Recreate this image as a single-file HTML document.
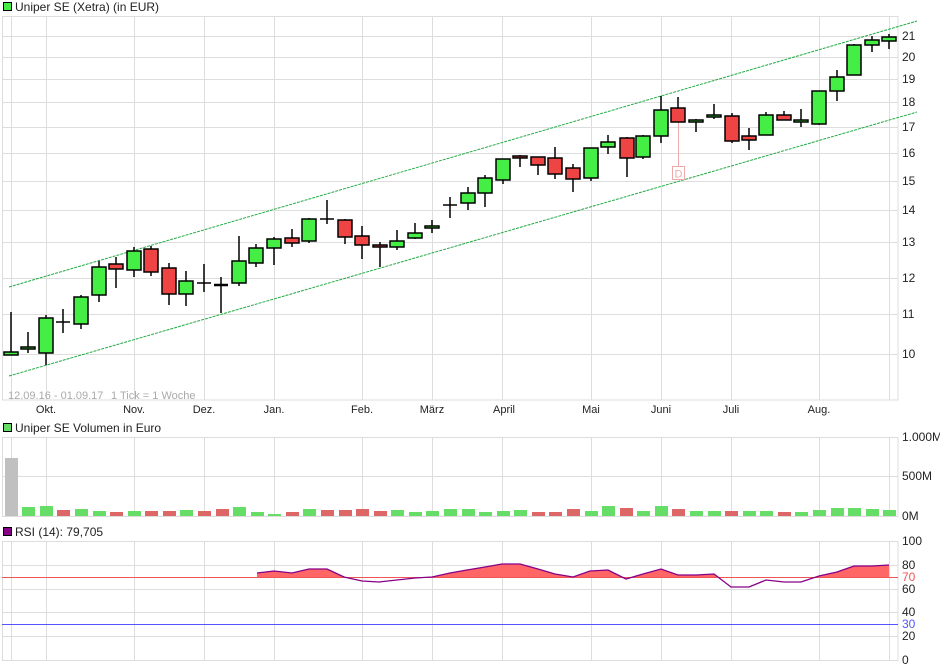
<!DOCTYPE html>
<html><head><meta charset="utf-8"><style>
html,body{margin:0;padding:0;background:#fff;}
svg{display:block;font-family:"Liberation Sans",Arial,sans-serif;}
</style></head><body>
<svg width="940" height="670" viewBox="0 0 940 670" xmlns="http://www.w3.org/2000/svg">
<rect width="940" height="670" fill="#fff"/>
<rect x="3.5" y="2.5" width="8" height="8" fill="#44ee44" stroke="#000" stroke-width="1"/>
<text x="15" y="11" font-size="12" fill="#222">Uniper SE (Xetra) (in EUR)</text>
<rect x="3.5" y="423.5" width="8" height="8" fill="#66dd66" stroke="#000" stroke-width="1"/>
<text x="15" y="432" font-size="12" fill="#222">Uniper SE Volumen in Euro</text>
<rect x="3.5" y="527.5" width="8" height="8" fill="#880088" stroke="#000" stroke-width="1"/>
<text x="15" y="536" font-size="12" fill="#222">RSI (14): 79,705</text>

<g stroke="#dddddd" stroke-width="1" fill="none">
<rect x="2.5" y="16.5" width="895.5" height="383.5"/>
<path d="M2 36.5H898M2 57.5H898M2 79.5H898M2 102.5H898M2 127.5H898M2 153.5H898M2 181.5H898M2 210.5H898M2 242.5H898M2 278.5H898M2 314.5H898M2 354.5H898"/>
<path d="M11.5 16V400M46.5 16V400M134.5 16V400M204.5 16V400M274.5 16V400M362.5 16V400M432.5 16V400M502.5 16V400M591.5 16V400M661.5 16V400M731.5 16V400M819.5 16V400M889.5 16V400"/>
<rect x="2.5" y="437.5" width="895.5" height="79"/>
<path d="M2 476.5H898"/>
<path d="M11.5 437V516M46.5 437V516M134.5 437V516M204.5 437V516M274.5 437V516M362.5 437V516M432.5 437V516M502.5 437V516M591.5 437V516M661.5 437V516M731.5 437V516M819.5 437V516M889.5 437V516"/>
<rect x="2.5" y="541.5" width="895.5" height="119"/>
<path d="M2 565.5H898M2 589.5H898M2 612.5H898M2 636.5H898"/>
<path d="M11.5 541V660M46.5 541V660M134.5 541V660M204.5 541V660M274.5 541V660M362.5 541V660M432.5 541V660M502.5 541V660M591.5 541V660M661.5 541V660M731.5 541V660M819.5 541V660M889.5 541V660"/>
</g>

<g font-size="12" fill="#222">
<text x="902" y="40">21</text><text x="902" y="61">20</text><text x="902" y="83">19</text><text x="902" y="106">18</text><text x="902" y="131">17</text><text x="902" y="157">16</text><text x="902" y="185">15</text><text x="902" y="214">14</text><text x="902" y="246">13</text><text x="902" y="282">12</text><text x="902" y="318">11</text><text x="902" y="358">10</text>
<text x="902" y="441">1.000M</text><text x="902" y="480">500M</text><text x="902" y="520">0M</text>
<text x="902" y="545">100</text><text x="902" y="569">80</text><text x="902" y="581" fill="#ee5555">70</text><text x="902" y="593">60</text><text x="902" y="616">40</text><text x="902" y="628" fill="#5555ff">30</text><text x="902" y="640">20</text><text x="902" y="664">0</text>
</g>
<g font-size="11" fill="#222" text-anchor="middle">
<text x="46" y="413">Okt.</text><text x="134" y="413">Nov.</text><text x="204" y="413">Dez.</text><text x="274" y="413">Jan.</text><text x="362" y="413">Feb.</text><text x="432" y="413">März</text><text x="504" y="413">April</text><text x="591" y="413">Mai</text><text x="661" y="413">Juni</text><text x="731" y="413">Juli</text><text x="819" y="413">Aug.</text>
</g>
<text x="8" y="399" font-size="11" fill="#aaaaaa">12.09.16 - 01.09.17</text>
<text x="111" y="399" font-size="11" fill="#aaaaaa">1 Tick = 1 Woche</text>

<path d="M9 287L917 21M9 376L917 112" stroke="#22aa44" stroke-width="1" stroke-dasharray="3,1" fill="none"/>

<path d="M678.5 122V168" stroke="#eeaaaa" stroke-width="1"/>
<rect x="672.5" y="166.5" width="12" height="13" fill="#fff" stroke="#eeaaaa"/>
<text x="678.5" y="177.5" font-size="11" fill="#eeaaaa" text-anchor="middle">D</text>

<g stroke="#000" stroke-width="1.5">
<line x1="11" y1="312" x2="11" y2="355"/><rect x="4" y="352" width="14" height="3" fill="#44ee44"/>
<line x1="28" y1="332" x2="28" y2="353"/><rect x="21" y="347" width="14" height="2" fill="#44ee44"/>
<line x1="46" y1="315" x2="46" y2="365"/><rect x="39" y="318" width="14" height="35" fill="#44ee44"/>
<line x1="63" y1="309" x2="63" y2="333"/><line x1="56" y1="322" x2="70" y2="322"/>
<line x1="81" y1="295" x2="81" y2="329"/><rect x="74" y="297" width="14" height="27" fill="#44ee44"/>
<line x1="99" y1="261" x2="99" y2="302"/><rect x="92" y="267" width="14" height="28" fill="#44ee44"/>
<line x1="116" y1="257" x2="116" y2="288"/><rect x="109" y="264" width="14" height="5" fill="#ee4444"/>
<line x1="134" y1="247" x2="134" y2="277"/><rect x="127" y="251" width="14" height="19" fill="#44ee44"/>
<line x1="151" y1="246" x2="151" y2="276"/><rect x="144" y="249" width="14" height="23" fill="#ee4444"/>
<line x1="169" y1="263" x2="169" y2="305"/><rect x="162" y="268" width="14" height="26" fill="#ee4444"/>
<line x1="186" y1="271" x2="186" y2="306"/><rect x="179" y="281" width="14" height="13" fill="#44ee44"/>
<line x1="204" y1="264" x2="204" y2="292"/><line x1="197" y1="283" x2="211" y2="283"/>
<line x1="221" y1="277" x2="221" y2="313"/><line x1="214" y1="285" x2="228" y2="285" stroke-width="2.5"/>
<line x1="239" y1="236" x2="239" y2="286"/><rect x="232" y="261" width="14" height="22" fill="#44ee44"/>
<line x1="256" y1="244" x2="256" y2="267"/><rect x="249" y="248" width="14" height="15" fill="#44ee44"/>
<line x1="274" y1="237" x2="274" y2="265"/><rect x="267" y="239" width="14" height="9" fill="#44ee44"/>
<line x1="292" y1="229" x2="292" y2="247"/><rect x="285" y="238" width="14" height="5" fill="#ee4444"/>
<line x1="309" y1="218" x2="309" y2="243"/><rect x="302" y="219" width="14" height="22" fill="#44ee44"/>
<line x1="327" y1="200" x2="327" y2="224"/><line x1="320" y1="219" x2="334" y2="219"/>
<line x1="345" y1="219" x2="345" y2="244"/><rect x="338" y="220" width="14" height="17" fill="#ee4444"/>
<line x1="362" y1="226" x2="362" y2="259"/><rect x="355" y="236" width="14" height="9" fill="#ee4444"/>
<line x1="380" y1="242" x2="380" y2="267"/><rect x="373" y="245" width="14" height="2" fill="#ee4444"/>
<line x1="397" y1="230" x2="397" y2="250"/><rect x="390" y="241" width="14" height="6" fill="#44ee44"/>
<line x1="415" y1="223" x2="415" y2="239"/><rect x="408" y="233" width="14" height="5" fill="#44ee44"/>
<line x1="432" y1="220" x2="432" y2="233"/><rect x="425" y="226" width="14" height="2" fill="#44ee44"/>
<line x1="450" y1="197" x2="450" y2="218"/><line x1="443" y1="205" x2="457" y2="205"/>
<line x1="468" y1="187" x2="468" y2="210"/><rect x="461" y="193" width="14" height="10" fill="#44ee44"/>
<line x1="485" y1="175" x2="485" y2="207"/><rect x="478" y="178" width="14" height="15" fill="#44ee44"/>
<line x1="503" y1="159" x2="503" y2="184"/><rect x="496" y="159" width="14" height="21" fill="#44ee44"/>
<line x1="520" y1="155" x2="520" y2="167"/><rect x="513" y="156" width="14" height="2" fill="#ee4444"/>
<line x1="538" y1="157" x2="538" y2="175"/><rect x="531" y="157" width="14" height="8" fill="#ee4444"/>
<line x1="555" y1="147" x2="555" y2="179"/><rect x="548" y="158" width="14" height="16" fill="#ee4444"/>
<line x1="573" y1="164" x2="573" y2="192"/><rect x="566" y="168" width="14" height="11" fill="#ee4444"/>
<line x1="591" y1="148" x2="591" y2="181"/><rect x="584" y="148" width="14" height="30" fill="#44ee44"/>
<line x1="608" y1="135" x2="608" y2="154"/><rect x="601" y="142" width="14" height="5" fill="#44ee44"/>
<line x1="627" y1="137" x2="627" y2="177"/><rect x="620" y="138" width="14" height="20" fill="#ee4444"/>
<line x1="643" y1="135" x2="643" y2="159"/><rect x="636" y="136" width="14" height="21" fill="#44ee44"/>
<line x1="661" y1="96" x2="661" y2="143"/><rect x="654" y="110" width="14" height="26" fill="#44ee44"/>
<line x1="678" y1="97" x2="678" y2="108"/><rect x="671" y="108" width="14" height="14" fill="#ee4444"/>
<line x1="696" y1="119" x2="696" y2="132"/><rect x="689" y="120" width="14" height="2" fill="#44ee44"/>
<line x1="714" y1="104" x2="714" y2="119"/><rect x="707" y="115" width="14" height="2" fill="#44ee44"/>
<line x1="732" y1="113" x2="732" y2="143"/><rect x="725" y="116" width="14" height="25" fill="#ee4444"/>
<line x1="749" y1="128" x2="749" y2="150"/><rect x="742" y="136" width="14" height="4" fill="#ee4444"/>
<line x1="766" y1="112" x2="766" y2="135"/><rect x="759" y="115" width="14" height="20" fill="#44ee44"/>
<line x1="784" y1="111" x2="784" y2="120"/><rect x="777" y="115" width="14" height="5" fill="#ee4444"/>
<line x1="801" y1="109" x2="801" y2="127"/><rect x="794" y="120" width="14" height="2" fill="#44ee44"/>
<line x1="819" y1="91" x2="819" y2="125"/><rect x="812" y="91" width="14" height="33" fill="#44ee44"/>
<line x1="837" y1="70" x2="837" y2="101"/><rect x="830" y="77" width="14" height="14" fill="#44ee44"/>
<line x1="854" y1="44" x2="854" y2="75"/><rect x="847" y="45" width="14" height="30" fill="#44ee44"/>
<line x1="872" y1="36" x2="872" y2="52"/><rect x="865" y="40" width="14" height="5" fill="#44ee44"/>
<line x1="889" y1="34" x2="889" y2="49"/><rect x="882" y="37" width="14" height="4" fill="#44ee44"/>
</g>

<g>
<rect x="5" y="458" width="13" height="58" fill="#c0c0c0"/>
<rect x="22" y="507" width="13" height="9" fill="#66dd66"/>
<rect x="40" y="506" width="13" height="10" fill="#66dd66"/>
<rect x="57" y="510" width="13" height="6" fill="#dd6666"/>
<rect x="75" y="509" width="13" height="7" fill="#66dd66"/>
<rect x="93" y="511" width="13" height="5" fill="#66dd66"/>
<rect x="110" y="512" width="13" height="4" fill="#dd6666"/>
<rect x="128" y="511" width="13" height="5" fill="#66dd66"/>
<rect x="145" y="511" width="13" height="5" fill="#dd6666"/>
<rect x="163" y="511" width="13" height="5" fill="#dd6666"/>
<rect x="180" y="510" width="13" height="6" fill="#66dd66"/>
<rect x="198" y="511" width="13" height="5" fill="#dd6666"/>
<rect x="216" y="509" width="13" height="7" fill="#dd6666"/>
<rect x="233" y="507" width="13" height="9" fill="#66dd66"/>
<rect x="251" y="512" width="13" height="4" fill="#66dd66"/>
<rect x="268" y="514" width="13" height="2" fill="#66dd66"/>
<rect x="286" y="512" width="13" height="4" fill="#dd6666"/>
<rect x="303" y="509" width="13" height="7" fill="#66dd66"/>
<rect x="321" y="510" width="13" height="6" fill="#dd6666"/>
<rect x="339" y="510" width="13" height="6" fill="#dd6666"/>
<rect x="356" y="509" width="13" height="7" fill="#dd6666"/>
<rect x="374" y="511" width="13" height="5" fill="#dd6666"/>
<rect x="391" y="510" width="13" height="6" fill="#66dd66"/>
<rect x="409" y="512" width="13" height="4" fill="#66dd66"/>
<rect x="426" y="511" width="13" height="5" fill="#66dd66"/>
<rect x="444" y="509" width="13" height="7" fill="#66dd66"/>
<rect x="462" y="509" width="13" height="7" fill="#66dd66"/>
<rect x="479" y="512" width="13" height="4" fill="#66dd66"/>
<rect x="497" y="511" width="13" height="5" fill="#66dd66"/>
<rect x="514" y="510" width="13" height="6" fill="#66dd66"/>
<rect x="532" y="512" width="13" height="4" fill="#dd6666"/>
<rect x="549" y="512" width="13" height="4" fill="#dd6666"/>
<rect x="567" y="509" width="13" height="7" fill="#dd6666"/>
<rect x="585" y="511" width="13" height="5" fill="#66dd66"/>
<rect x="602" y="506" width="13" height="10" fill="#66dd66"/>
<rect x="620" y="508" width="13" height="8" fill="#dd6666"/>
<rect x="637" y="511" width="13" height="5" fill="#66dd66"/>
<rect x="655" y="506" width="13" height="10" fill="#66dd66"/>
<rect x="672" y="509" width="13" height="7" fill="#dd6666"/>
<rect x="690" y="511" width="13" height="5" fill="#66dd66"/>
<rect x="708" y="511" width="13" height="5" fill="#66dd66"/>
<rect x="725" y="511" width="13" height="5" fill="#dd6666"/>
<rect x="743" y="511" width="13" height="5" fill="#66dd66"/>
<rect x="760" y="511" width="13" height="5" fill="#66dd66"/>
<rect x="778" y="512" width="13" height="4" fill="#dd6666"/>
<rect x="795" y="512" width="13" height="4" fill="#66dd66"/>
<rect x="813" y="510" width="13" height="6" fill="#66dd66"/>
<rect x="831" y="508" width="13" height="8" fill="#66dd66"/>
<rect x="848" y="508" width="13" height="8" fill="#66dd66"/>
<rect x="866" y="509" width="13" height="7" fill="#66dd66"/>
<rect x="883" y="510" width="13" height="6" fill="#66dd66"/>
</g>

<defs><clipPath id="above"><rect x="0" y="540" width="940" height="37"/></clipPath></defs>
<polygon clip-path="url(#above)" fill="#ff6666" points="257,577 257,573 274,571 292,573 309,569 327,569 344,577 362,581 379,582 397,580 415,578 432,577 450,573 467,570 485,567 502,564 520,564 538,569 555,574 573,577 590,571 608,570 626,579 643,574 661,569 678,575 696,575 714,574 731,587 749,587 766,580 784,582 801,582 819,576 837,572 854,566 872,566 889,565 889,577"/>
<path d="M2 577.5H898" stroke="#ee5555" stroke-width="1"/>
<path d="M2 624.5H898" stroke="#5555ff" stroke-width="1"/>
<polyline fill="none" stroke="#880088" stroke-width="1.3" points="257,573 274,571 292,573 309,569 327,569 344,577 362,581 379,582 397,580 415,578 432,577 450,573 467,570 485,567 502,564 520,564 538,569 555,574 573,577 590,571 608,570 626,579 643,574 661,569 678,575 696,575 714,574 731,587 749,587 766,580 784,582 801,582 819,576 837,572 854,566 872,566 889,565"/>
</svg>
</body></html>
